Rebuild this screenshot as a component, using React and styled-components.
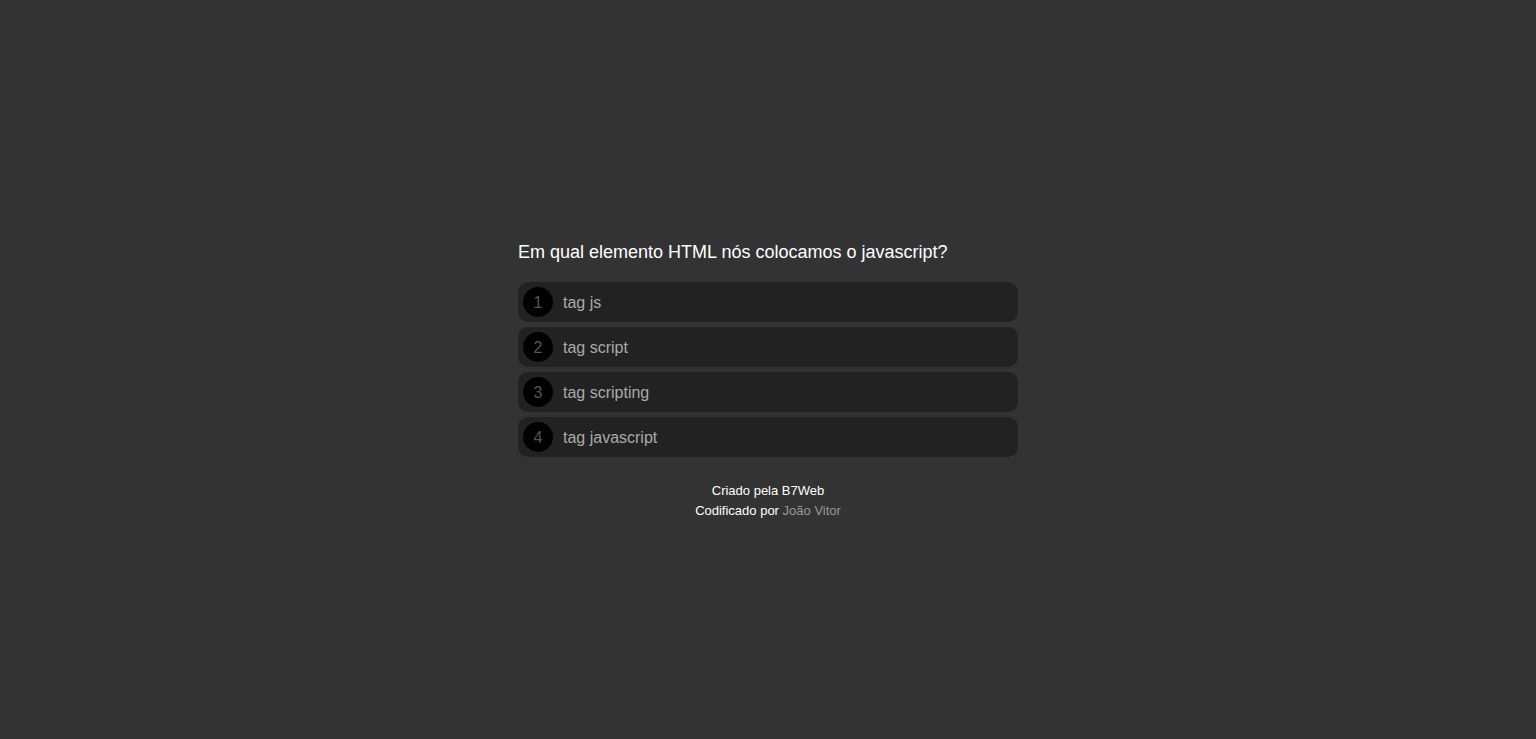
import styled, { createGlobalStyle } from "styled-components";

const GlobalStyle = createGlobalStyle`
  * { box-sizing: border-box; }
  body {
    margin: 0;
    background-color: #333;
    font-family: "Liberation Sans", Arial, sans-serif;
  }
`;

const Page = styled.div`
  min-height: 100vh;
  padding-top: 242px;
`;

const Quiz = styled.div`
  width: 500px;
  margin: 0 auto;
`;

const Question = styled.div`
  color: #fff;
  font-size: 18px;
  line-height: 21px;
  margin-bottom: 19px;
`;

const Options = styled.div`
  display: flex;
  flex-direction: column;
  gap: 5px;
`;

const Option = styled.div`
  display: flex;
  align-items: center;
  height: 40px;
  padding: 0 5px;
  background-color: #222;
  border-radius: 10px;
  color: #aaa;
  font-size: 16px;
  cursor: pointer;
`;

const Label = styled.span`
  padding-top: 2px;
`;

const Number = styled.span`
  display: flex;
  align-items: center;
  justify-content: center;
  width: 30px;
  height: 30px;
  margin-right: 10px;
  padding-top: 2px;
  border-radius: 50%;
  background-color: #000;
  color: #555;
  font-size: 16px;
`;

const Footer = styled.div`
  margin-top: 24px;
  text-align: center;
  color: #fff;
  font-size: 13px;
  line-height: 20px;
`;

const Author = styled.span`
  color: #999;
`;

const answers = ["tag js", "tag script", "tag scripting", "tag javascript"];

const App = () => {
  return (
    <Page>
      <GlobalStyle />
      <Quiz>
        <Question>Em qual elemento HTML nós colocamos o javascript?</Question>
        <Options>
          {answers.map((a, index) => (
            <Option key={index}>
              <Number>{index + 1}</Number>
              <Label>{a}</Label>
            </Option>
          ))}
        </Options>
        <Footer>
          <div>Criado pela B7Web</div>
          <div>
            Codificado por <Author>João Vitor</Author>
          </div>
        </Footer>
      </Quiz>
    </Page>
  );
};

export default App;
